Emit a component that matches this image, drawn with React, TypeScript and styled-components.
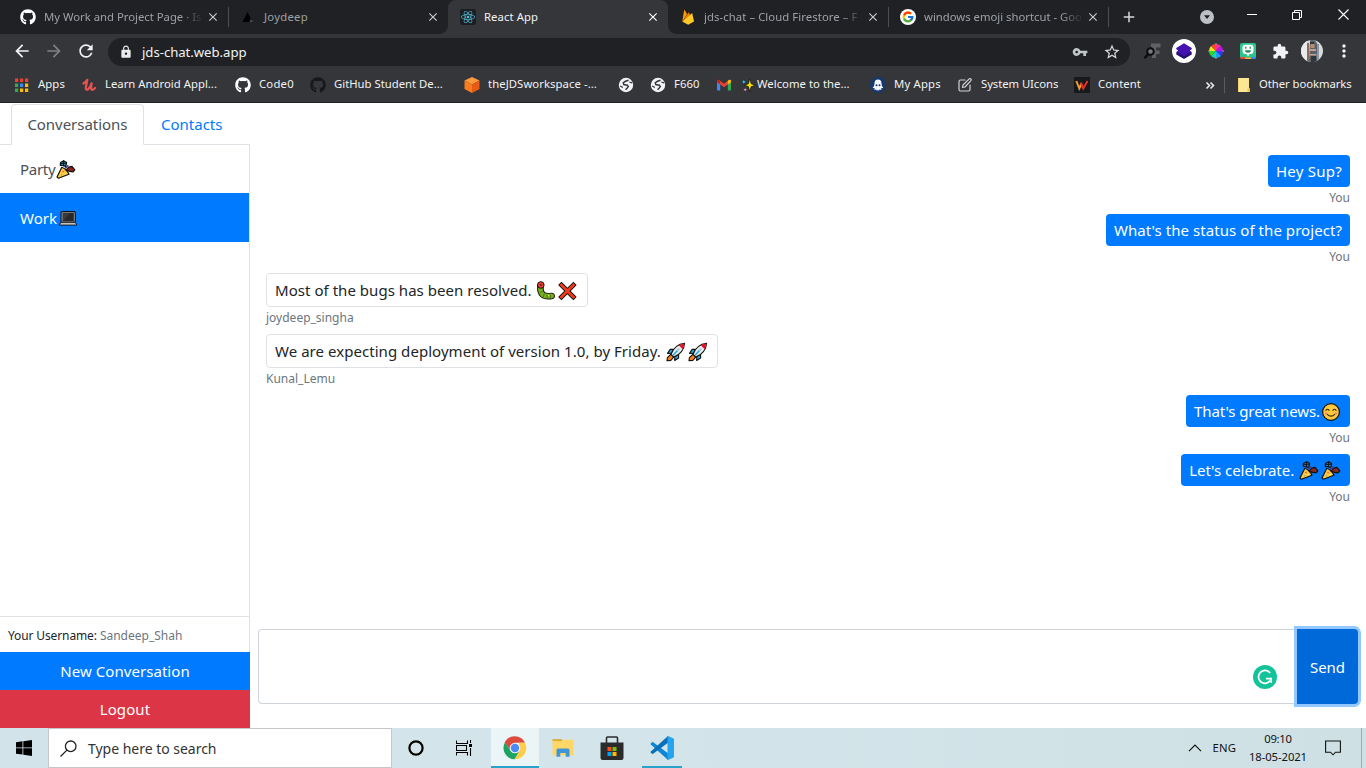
import React from 'react';
import styled, { createGlobalStyle, css } from 'styled-components';
import {
  MdAdd,
  MdArrowBack,
  MdArrowForward,
  MdClose,
  MdExtension,
  MdLock,
  MdMoreVert,
  MdRefresh,
  MdStarBorder,
  MdVpnKey,
} from 'react-icons/md';
import { FaGithub, FaReact } from 'react-icons/fa';
import { FcGoogle } from 'react-icons/fc';

const GlobalStyle = createGlobalStyle`
  * { box-sizing: border-box; }
  body { margin: 0; overflow: hidden; font-family: "Noto Sans", "Open Sans", sans-serif; }
  svg { display: block; flex: none; }
`;

const Screen = styled.div`
  width: 1366px;
  height: 768px;
  display: flex;
  flex-direction: column;
  background: #fff;
`;

const Label = styled.span<{ $track?: number }>`
  white-space: pre;
  letter-spacing: ${(p) => p.$track ?? 0}px;
`;

/* ---------- browser chrome ---------- */

const TabStrip = styled.header`
  height: 34px;
  display: flex;
  background: #202124;
  padding-left: 8px;
`;

const BrowserTab = styled.div<{ $active?: boolean; $divider?: boolean }>`
  position: relative;
  width: 220px;
  height: 34px;
  display: flex;
  align-items: center;
  gap: 8px;
  padding: 0 8px 0 12px;
  font-size: 11.3px;
  color: #9da1a6;
  ${(p) =>
    p.$active &&
    css`
      background: #35363a;
      color: #f1f3f4;
      border-radius: 8px 8px 0 0;
      &::before,
      &::after {
        content: '';
        position: absolute;
        bottom: 0;
        width: 8px;
        height: 8px;
      }
      &::before {
        left: -8px;
        background: radial-gradient(circle at 0 0, transparent 7.5px, #35363a 8px);
      }
      &::after {
        right: -8px;
        background: radial-gradient(circle at 100% 0, transparent 7.5px, #35363a 8px);
      }
    `}
  ${(p) =>
    p.$divider &&
    css`
      &::after {
        content: '';
        position: absolute;
        right: -1px;
        top: 7px;
        width: 1px;
        height: 20px;
        background: #4c4e52;
      }
    `}
`;

const TabTitle = styled.div<{ $fade?: boolean }>`
  width: 161px;
  height: 20px;
  line-height: 20px;
  white-space: pre;
  ${(p) => p.$fade && css`mask-image: linear-gradient(90deg, #000 136px, transparent 160px);`}
`;

const CloseIcon = styled(MdClose)<{ $bright?: boolean }>`
  width: 14px;
  height: 14px;
  margin-left: -7px;
  color: ${(p) => (p.$bright ? '#fff' : '#c8cbcf')};
`;

const NewTab = styled.div`
  width: 42px;
  display: flex;
  align-items: center;
  justify-content: center;
  color: #d5d7da;
`;

const WindowButtons = styled.div`
  margin-left: auto;
  display: flex;
  align-items: center;
`;

const WindowButton = styled.div<{ $w?: number; $drop?: number }>`
  width: ${(p) => p.$w ?? 46}px;
  padding-top: ${(p) => p.$drop ?? 0}px;
  height: 29px;
  display: flex;
  justify-content: center;
  align-items: center;
  align-self: flex-start;
`;

const Toolbar = styled.div`
  height: 34px;
  padding: 2px 6px 2px 6px;
  display: flex;
  align-items: center;
  background: #35363a;
`;

const ToolButton = styled.div<{ $dim?: boolean }>`
  width: 32px;
  height: 32px;
  display: flex;
  align-items: center;
  justify-content: center;
  color: ${(p) => (p.$dim ? '#7f8184' : '#f1f3f4')};
`;

const AddressBar = styled.div`
  width: 1022px;
  height: 28px;
  margin: 2px 6px 0;
  padding: 0 2px 0 11px;
  border-radius: 14px;
  background: #202124;
  color: #f1f3f4;
  display: flex;
  align-items: center;
  font-size: 13.2px;
  line-height: 20px;
  ${Label} {
    flex: 1;
    margin-left: 9px;
    padding-bottom: 1px;
  }
`;

const BookmarkBar = styled.nav`
  height: 35px;
  padding: 0 14px 0 14px;
  display: flex;
  align-items: center;
  background: #35363a;
  border-bottom: 1px solid #1f2023;
  color: #f1f3f4;
  font-size: 11.3px;
`;

const Bookmark = styled.div<{ $w: number }>`
  width: ${(p) => p.$w}px;
  display: flex;
  align-items: center;
  gap: 8px;
  line-height: 18px;
  padding-bottom: 1px;
  ${Label} {
    padding-bottom: 2px;
  }
`;

const BookmarkText = styled.div`
  display: flex;
  align-items: center;
`;

const Overflow = styled.div`
  margin-left: auto;
  display: flex;
  align-items: center;
`;

const OverflowDivider = styled.div`
  width: 1px;
  height: 16px;
  margin: 0 12px 0 9px;
  background: #5a5c60;
`;

/* ---------- chat page ---------- */

const Page = styled.main`
  flex: 1;
  min-height: 0;
  display: flex;
  font-size: 15px;
  line-height: 24px;
  color: #212529;
`;

const Sidebar = styled.aside`
  width: 250px;
  display: flex;
  flex-direction: column;
`;

const NavTabs = styled.div`
  height: 42px;
  padding: 1px 0 0 11px;
  display: flex;
  border-bottom: 1px solid #dee2e6;
`;

const NavTab = styled.div<{ $active?: boolean }>`
  height: 41px;
  padding: 7px 16px 0;
  border: 1px solid transparent;
  color: #007bff;
  ${(p) =>
    p.$active &&
    css`
      width: 133px;
      padding-left: 15.4px;
      background: #fff;
      color: #495057;
      border-color: #dee2e6 #dee2e6 #fff;
      border-radius: 4px 4px 0 0;
    `}
`;

const ConversationList = styled.div`
  flex: 1;
  border-right: 1px solid #dee2e6;
`;

const Conversation = styled.div<{ $active?: boolean }>`
  height: ${(p) => (p.$active ? 49 : 48)}px;
  padding: 1px 20px 0;
  display: flex;
  align-items: center;
  color: ${(p) => (p.$active ? '#fff' : '#495057')};
  background: ${(p) => (p.$active ? '#007bff' : '#fff')};
  ${Label} {
    padding-bottom: ${(p) => (p.$active ? 0 : 2)}px;
  }
`;

const Username = styled.div`
  height: 36px;
  padding: 8px;
  font-size: 12px;
  line-height: 21px;
  border-top: 1px solid #dee2e6;
  border-right: 1px solid #dee2e6;
`;

const Muted = styled.span`
  color: #6c757d;
`;

const BlockButton = styled.div<{ $color: string }>`
  height: 38px;
  display: flex;
  align-items: center;
  justify-content: center;
  padding-bottom: 1px;
  color: #fff;
  background: ${(p) => p.$color};
`;

const Chat = styled.section`
  flex: 1;
  display: flex;
  flex-direction: column;
`;

const Messages = styled.div`
  flex: 1;
  padding: 52px 16px 0;
  display: flex;
  flex-direction: column;
  gap: 8px;
`;

const Message = styled.div<{ $mine?: boolean }>`
  display: flex;
  flex-direction: column;
  align-items: ${(p) => (p.$mine ? 'flex-end' : 'flex-start')};
`;

const Bubble = styled.div<{ $mine?: boolean }>`
  height: ${(p) => (p.$mine ? 32 : 34)}px;
  padding: 1px 8px 0;
  display: flex;
  align-items: center;
  border-radius: 4px;
  ${(p) => (p.$mine ? 'background: #007bff; color: #fff;' : 'border: 1px solid #dee2e6;')}
  ${Label} {
    padding-bottom: 2px;
  }
`;

const Sender = styled.div`
  height: 19px;
  line-height: 21px;
  font-size: 12px;
  color: #6c757d;
`;

const Composer = styled.div`
  position: relative;
  height: 99px;
  padding: 0 8px 24px;
  display: flex;
`;

const MessageInput = styled.div`
  flex: 1;
  border: 1px solid #ced4da;
  border-right: 0;
  border-radius: 4px 0 0 4px;
`;

const SendButton = styled.div`
  width: 61px;
  display: flex;
  align-items: center;
  justify-content: center;
  color: #fff;
  background: #0069d9;
  border-radius: 0 4px 4px 0;
  box-shadow: 0 0 0 3px #93c7ff;
`;

const Grammar = styled.div`
  position: absolute;
  right: 89px;
  top: 36px;
`;

/* ---------- taskbar ---------- */

const Taskbar = styled.footer`
  height: 40px;
  display: flex;
  background: linear-gradient(90deg, #d3e3ea, #d3e5ea 50%, #cfe0e5);
  color: #101314;
`;

const StartButton = styled.div`
  width: 48px;
  display: flex;
  align-items: center;
  justify-content: center;
`;

const SearchBox = styled.div`
  width: 344px;
  padding: 1px 11px 0;
  display: flex;
  align-items: center;
  gap: 11px;
  border: 1px solid #c4c8ca;
  background: #fff;
  color: #333;
  font-size: 14px;
  line-height: 22px;
`;

const TaskItem = styled.div<{ $active?: boolean; $gap?: number; $line?: number }>`
  position: relative;
  width: 48px;
  margin-left: ${(p) => p.$gap ?? 0}px;
  display: flex;
  align-items: center;
  justify-content: center;
  background: ${(p) => (p.$active ? '#ebf4f7' : 'transparent')};
  ${(p) =>
    p.$line &&
    css`
      &::after {
        content: '';
        position: absolute;
        bottom: 0;
        left: ${(48 - p.$line) / 2}px;
        width: ${p.$line}px;
        height: 2px;
        background: #2aa3cb;
      }
    `}
`;

const Tray = styled.div`
  margin-left: auto;
  display: flex;
  align-items: center;
  font-size: 11.3px;
`;

const Language = styled.div`
  margin: 0 13px 0 11px;
  padding-bottom: 1px;
`;

const Clock = styled.div`
  width: 58px;
  display: flex;
  flex-direction: column;
  align-items: center;
  line-height: 18px;
`;

const NotificationSlot = styled.div`
  margin: 0 20px 0 18px;
`;

const ShowDesktop = styled.div`
  width: 5px;
  height: 40px;
  border-left: 1px solid #9fadb2;
`;

/* ---------- emoji ---------- */

const Party = () => (
  <svg width="22" height="22" viewBox="0 0 22 22" strokeLinejoin="round" strokeLinecap="round">
    <path d="M6.800 8.200 Q11.500 10 14 15.200L3.400 19.200 2 17.900Z" fill="#ffc83d" stroke="#111" strokeWidth="1.200" />
    <path d="M5.500 3.500 8.600 1.800 11.600 3.500 10.800 7.700 8.300 6.500 5.300 6.300Z" fill="#2580a6" stroke="#111" strokeWidth="1.200" />
    <path d="M8.500 2v5M5.800 4.600l5.400-.4" stroke="#111" strokeWidth="0.900" />
    <path d="M11 11.200 13.800 8.200 17 7.400 19.800 10.800 18 12.800 14.800 12.400Z" fill="#8c261c" stroke="#111" strokeWidth="1.200" />
    <path d="M10.500 8.800 12.800 6.800" stroke="#463a9b" strokeWidth="1.600" />
    <circle cx="8" cy="12.600" r="0.800" fill="#e25544" />
    <circle cx="6.800" cy="15.800" r="0.600" fill="#2fa7c9" />
    <circle cx="10.500" cy="14.500" r="0.600" fill="#fff3b8" />
  </svg>
);

const Laptop = () => (
  <svg width="22" height="22" viewBox="0 0 22 22">
    <rect x="4" y="4.6" width="14.3" height="10.8" rx="1" fill="#9b9b9b" stroke="#111" strokeWidth="1.1" />
    <rect x="5.6" y="6" width="11.2" height="8.2" fill="#282828" />
    <path d="M6 14 13 6.2h-7Z" fill="#3b3b3b" />
    <path d="M3.8 15.3h14.6l1.3 2.8H2.4Z" fill="#c2c2c2" stroke="#111" strokeWidth="0.9" strokeLinejoin="round" />
  </svg>
);

const Bug = () => (
  <svg width="22" height="22" viewBox="0 0 22 22">
    <path d="M5.400 6.500Q5 12 7.500 14.400T16.600 16" fill="none" stroke="#111" strokeWidth="6.600" strokeLinecap="round" />
    <path d="M5.400 6.500Q5 12 7.500 14.400T16.600 16" fill="none" stroke="#78b020" strokeWidth="4.800" strokeLinecap="round" />
    <path d="M5 12.500l2.800-1.500M8.200 17l1.200-3.500M12 18.500v-3.800M15.500 18.500v-3.800" stroke="#44700f" strokeWidth="0.900" />
    <circle cx="13.700" cy="15.500" r="0.800" fill="#d5e04a" />
    <circle cx="5.800" cy="5" r="3.300" fill="#e8402d" stroke="#111" strokeWidth="1" />
    <circle cx="5.800" cy="5" r="1.100" fill="#701b10" />
  </svg>
);

const Cross = () => (
  <svg width="22" height="22" viewBox="0 0 22 22" strokeLinecap="square">
    <path d="m4.400 5 12 12M16.400 5l-12 12" stroke="#111" strokeWidth="4.600" />
    <path d="m4.400 5 12 12M16.400 5l-12 12" stroke="#f03a17" strokeWidth="2.800" />
  </svg>
);

const Rocket = () => (
  <svg width="22" height="22" viewBox="0 0 22 22" strokeLinejoin="round">
    <path d="M6.200 13 2.400 16.600 2 19.700 5.800 19.400 9 15.800Z" fill="#f7821b" stroke="#111" strokeWidth="1.100" />
    <path d="M8.600 8.400H5.200L2.500 12.400 6.600 12.300ZM13.600 13.400V17L9.700 19.500 9.800 15.600Z" fill="#2aa8e0" stroke="#111" strokeWidth="1.100" />
    <path d="M6 13.400Q9.800 3.200 19.600 2.200 18.800 12.200 8.600 16Z" fill="#e8edf0" stroke="#111" strokeWidth="1.100" />
    <path d="M13.800 4.200Q16.600 2.800 19.300 2.500 19 5.600 17.600 8.200Z" fill="#e81224" />
    <path d="m8 14.200 4.400-4.600" stroke="#2aa8e0" strokeWidth="1.600" />
    <circle cx="13.400" cy="8.500" r="1.300" fill="#b4c6ce" />
  </svg>
);

const Smile = () => (
  <svg width="22" height="22" viewBox="0 0 22 22" fill="none" strokeLinecap="round">
    <circle cx="11" cy="11" r="8.400" fill="#ffc83d" stroke="#111" strokeWidth="1.200" />
    <path d="M5.900 9.400q1.600-2.200 3.200 0M12.900 9.400q1.600-2.200 3.200 0" stroke="#3a2a10" strokeWidth="1.100" />
    <path d="M7.200 13.400q3.800 3.400 7.600 0" stroke="#3a2a10" strokeWidth="1.100" />
    <circle cx="5.900" cy="12.300" r="1.300" fill="#ff8f5a" />
    <circle cx="16.100" cy="12.300" r="1.300" fill="#ff8f5a" />
  </svg>
);

const Sparkles = () => (
  <svg width="17" height="16" viewBox="0 0 17 16">
    <path d="M9.8 1.6 11.2 6.8 15.6 8.2 11.2 9.6 9.8 14.6 8.4 9.6 4.4 8.2 8.4 6.8Z" fill="#fce100" stroke="#111" strokeWidth="0.7" />
    <path d="m3.8 2 .8 2.1 2 .8-2 .8-.8 2.1L3 5.7 1 4.9 3 4.1Z" fill="#31c4ee" stroke="#111" strokeWidth="0.4" />
    <path d="m5.2 10.2.7 1.8 1.7.7-1.7.7-.7 1.7-.7-1.7-1.7-.7 1.7-.7Z" fill="#f7a1d4" stroke="#111" strokeWidth="0.4" />
  </svg>
);

/* ---------- site and app icons ---------- */

const Triangle = () => (
  <svg width="16" height="16" viewBox="0 0 16 16">
    <path d="M7.500 3 12.500 13H2.500Z" fill="#000" />
    <path d="m10.500 10 3 3h-4Z" fill="#4a4b4e" />
  </svg>
);

const ReactBadge = styled(FaReact)`
  width: 16px;
  height: 16px;
  padding: 1px;
  border-radius: 2px;
  background: #1c1e22;
  color: #53c1de;
`;

const Firebase = () => (
  <svg width="16" height="16" viewBox="0 0 16 16">
    <path d="M2.300 12.500 4.300.600 7 5Z" fill="#ffa000" />
    <path d="m2.300 12.500 6.400-9.300L10.300 6Z" fill="#f57c00" />
    <path d="m2.300 12.500 9.900-8.600 1.800 8.600-5.800 3.300Z" fill="#ffca28" />
  </svg>
);

const GoogleBadge = styled(FcGoogle)`
  width: 16px;
  height: 16px;
  padding: 1.5px;
  border-radius: 50%;
  background: #fff;
`;

const Apps = () => (
  <svg width="16" height="16" viewBox="0 0 16 16">
    {['#ea4335', '#ea4335', '#ea4335', '#34a853', '#4285f4', '#fbbc04', '#34a853', '#fbbc04', '#fbbc04'].map((c, i) => (
      <rect key={i} x={1 + (i % 3) * 5} y={1.5 + Math.floor(i / 3) * 5} width="3.2" height="3.5" fill={c} />
    ))}
  </svg>
);

const Udemy = () => (
  <svg width="16" height="16" viewBox="0 0 16 16" fill="none" stroke="#ea5252" strokeWidth="2.2" strokeLinecap="round" strokeLinejoin="round">
    <path d="M2.500 6.500Q5.500 4.500 6.300 2.800 5.400 8 4.800 10.500 4.500 13.400 7 12.400 9.400 10.500 10.600 6.300 9.500 12.800 11 12.900 12.800 12.800 14.200 10.800" />
  </svg>
);

const Cube = () => (
  <svg width="16" height="16" viewBox="0 0 16 16">
    <path d="M8 0 15.500 3.500 8 7.500.500 3.500Z" fill="#ff9a3c" />
    <path d="M.500 3.500 8 7.500V16L.500 12Z" fill="#f97c1e" />
    <path d="M15.500 3.500 8 7.500V16l7.500-4Z" fill="#ea5a14" />
  </svg>
);

const Globe = () => (
  <svg width="16" height="16" viewBox="0 0 16 16">
    <circle cx="8" cy="8" r="7.200" fill="#f1f3f4" />
    <path d="M10.500 3.200 7.500 4.200 5.300 5.800 5.800 7.600 9.300 8.200 10.300 9.600 9 11.300 7.600 12.800" fill="none" stroke="#35363a" strokeWidth="1.500" />
    <path d="M11.500 5.200 14 5.800M2.200 9 4.800 10.500" stroke="#35363a" strokeWidth="1.300" />
  </svg>
);

const Gmail = () => (
  <svg width="16" height="16" viewBox="0 0 16 16">
    <path d="M1 4v8.600q0 .9.9.9h2.300V7Z" fill="#4285f4" />
    <path d="M15 4v8.600q0 .9-.9.9h-2.300V7Z" fill="#34a853" />
    <path d="M1 5V3.600Q1.500 2.200 3 2.900L8 6.700l5-3.800q1.500-.7 2 .7V5l-7 5.300Z" fill="#ea4335" />
    <path d="m15 3.600v1.600l-3.200 2.400V3.800L13 2.900q1.500-.7 2 .7Z" fill="#fbbc04" />
    <path d="M1 5V3.600Q1.500 2.200 3 2.900l1.200.9v3.800Z" fill="#c5221f" />
  </svg>
);

const Octopus = () => (
  <svg width="16" height="16" viewBox="0 0 16 16">
    <circle cx="8" cy="8" r="8" fill="#16396d" />
    <path d="M8 2.500q3.500 0 3.500 4 0 2.300 1.800 4.500l-2.300.3.500 1.700-2-.6-.7 1.600L8 12.600 7 14l-.7-1.600-2 .6.500-1.700L2.700 11q1.800-2.200 1.800-4.500 0-4 3.500-4Z" fill="#f4f6f8" />
    <circle cx="6.500" cy="8.300" r="1" fill="#16396d" />
    <circle cx="9.500" cy="8.300" r="1" fill="#16396d" />
  </svg>
);

const PencilBox = () => (
  <svg width="16" height="16" viewBox="0 0 16 16" fill="none" stroke="#d0d2d4" strokeWidth="1.200" strokeLinejoin="round" strokeLinecap="round">
    <path d="M8 3H3.500Q2 3 2 4.500v8Q2 14 3.500 14h8q1.500 0 1.500-1.500V8" />
    <path d="M5.500 10.500 6 8l6.200-6.200q1-.6 1.700.2t0 1.700L8 10Z" />
  </svg>
);

const WBadge = () => (
  <svg width="16" height="16" viewBox="0 0 16 16" fill="none" strokeWidth="2">
    <rect width="16" height="16" fill="#17191b" />
    <path d="m2.300 4 3 7.500L7.500 6.500" stroke="#f0a030" />
    <path d="m6.800 5.500 2.500 6L13.500 4" stroke="#e0322e" />
  </svg>
);

const Folder = () => (
  <svg width="14" height="16" viewBox="0 0 14 16">
    <path d="M1 1h11v10.500h1V15H1Z" fill="#ffe694" />
    <path d="M10.500 11.500h2.500V15h-2.500Z" fill="#e9c74e" />
    <path d="M1 1h1v14H1Z" fill="#f3d36a" />
  </svg>
);

const Scanner = () => (
  <svg width="18" height="18" viewBox="0 0 18 18" fill="none">
    <path d="M8 1.500h9.500V5.500H13v3h3.500V12H13v4H9V5.500H8Z" fill="#5f6165" />
    <circle cx="7.500" cy="9.500" r="3.300" stroke="#0c0c0d" strokeWidth="2" fill="#77797c" />
    <path d="m5 12.300-3.500 4" stroke="#0c0c0d" strokeWidth="2.500" />
  </svg>
);

const Layers = () => (
  <svg width="24" height="24" viewBox="0 0 24 24">
    <circle cx="12" cy="12" r="12" fill="#fff" />
    <path d="m4.300 13.300 7.700-3 7.700 3v2.200L12 20l-7.700-4.500Z" fill="#24116b" />
    <path d="m12 4.200 7.700 4.800v1.200l-2 1.400 2 1.300L12 17.200l-7.700-4.300 2-1.300-2-1.400V9Z" fill="#4412b0" />
  </svg>
);

const wheel = ['#ff2d9b', '#c011f0', '#3a33f8', '#1ca0ff', '#16d8b0', '#30d828', '#f0e51b', '#ff4a20'];
const ColorWheel = () => (
  <svg width="16" height="16" viewBox="-8 -8 16 16">
    {wheel.map((c, i) => (
      <path key={c} d="M0 0V-7A7 7 0 0 1 4.950-4.950Z" fill={c} transform={`rotate(${i * 45})`} />
    ))}
    <path d="M0-8V-6M0 8V6M-8 0H-6M8 0H6" stroke="#9a9c9f" />
  </svg>
);

const Bitmoji = () => (
  <svg width="16" height="16" viewBox="0 0 16 16">
    <rect width="16" height="16" rx="2" fill="#2bc48a" />
    <path d="M0 14h5v2H2q-2 0-2-2Z" fill="#ef3f3a" />
    <path d="M5 14.500h6V16H5Z" fill="#ffb02e" />
    <path d="M11 14h5q0 2-2 2h-3Z" fill="#3b82f6" />
    <path d="M5 1.800h6q2.500 0 2.500 2.500v4q0 2.500-2.500 2.700H9.500L8 13.500 6.500 11H5Q2.500 10.800 2.500 8.300v-4Q2.500 1.800 5 1.800Z" fill="#fff" />
    <path d="M5.800 3.800v2M10.200 3.800v2" stroke="#178a60" strokeWidth="1.300" />
    <path d="M4.800 7.300h6.400q-.5 2.500-3.200 2.500T4.800 7.300Z" fill="#178a60" />
  </svg>
);

const Avatar = () => (
  <svg width="22" height="22" viewBox="0 0 22 22">
    <clipPath id="avatar">
      <circle cx="11" cy="11" r="11" />
    </clipPath>
    <g clipPath="url(#avatar)">
      <rect width="22" height="22" fill="#d6dadd" />
      <path d="M0 0h6l1 22H0Z" fill="#e8eaeb" />
      <path d="M6 3h2v18H6Z" fill="#8f6b58" />
      <path d="M9 0h5l3 5v17H8Z" fill="#59616a" />
      <path d="M9.500 4h4v4h-4Z" fill="#b98e77" />
      <path d="M9 9h6v2H9ZM8.500 14h7v1.500h-7Z" fill="#c2a08d" />
      <path d="M10 16h5v6h-5ZM9 2h4v2H9Z" fill="#2f353c" />
      <path d="M16 4h2v18h-2Z" fill="#8b97a2" />
    </g>
  </svg>
);

const TabSearch = () => (
  <svg width="14" height="14" viewBox="0 0 14 14">
    <circle cx="7" cy="7" r="7" fill="#bdc1c6" />
    <path d="M4 5.200h6L7 9Z" fill="#202124" />
  </svg>
);

const Minimize = () => (
  <svg width="10" height="10" viewBox="0 0 10 10">
    <path d="M0 4.500h10" stroke="#fff" />
  </svg>
);

const Restore = () => (
  <svg width="10" height="10" viewBox="0 0 10 10" fill="none" stroke="#fff">
    <path d="M.500 2.500h7v7h-7ZM2.500 2.500v-2h7v7h-2" />
  </svg>
);

const CloseWindow = () => (
  <svg width="11" height="11" viewBox="0 0 11 11">
    <path d="m.500.500 10 10M10.500.500l-10 10" stroke="#fff" strokeWidth="1.100" />
  </svg>
);

const Chevrons = () => (
  <svg width="10" height="9" viewBox="0 0 10 9" fill="none" stroke="#e8eaed" strokeWidth="1.600">
    <path d="M1.500 1.500 4.500 4.500 1.500 7.500M5.500 1.500 8.500 4.500 5.500 7.500" />
  </svg>
);

const Grammarly = () => (
  <svg width="24" height="24" viewBox="0 0 24 24" fill="none">
    <circle cx="12" cy="12" r="12" fill="#15c39a" />
    <path d="M17.200 8A6.500 6.500 0 1 0 17.300 15.600" stroke="#fff" strokeWidth="1.700" />
    <path d="M13 13.700h5.200v4.200" stroke="#fff" strokeWidth="1.700" />
  </svg>
);

const Windows = () => (
  <svg width="16" height="16" viewBox="0 0 16 16" fill="#000">
    <path d="M0 2.200 6.500 1.300v6.200H0ZM7.300 1.200 16 0v7.500H7.300ZM0 8.300h6.500v6.300L0 13.700ZM7.300 8.300H16V16l-8.700-1.200Z" />
  </svg>
);

const SearchGlass = () => (
  <svg width="17" height="17" viewBox="0 0 17 17" fill="none" stroke="#222" strokeWidth="1.300">
    <circle cx="10.700" cy="6.300" r="5.300" />
    <path d="M6.900 10.100.500 16.500" />
  </svg>
);

const Cortana = () => (
  <svg width="16" height="16" viewBox="0 0 16 16">
    <circle cx="8" cy="8" r="6.600" fill="none" stroke="#000" strokeWidth="2.200" />
  </svg>
);

const TaskView = () => (
  <svg width="17" height="16" viewBox="0 0 17 16" fill="none" stroke="#000" strokeWidth="1.100">
    <path d="M.500.500v3h11v-3M.500 15.500v-3h11v3M.500 5.500h10v5h-10ZM14.500 0v3M14.500 8v8" />
    <path d="M13 4h3v3h-3Z" fill="#000" stroke="none" />
  </svg>
);

const Chrome = () => (
  <svg width="24" height="24" viewBox="0 0 24 24">
    <path d="M1.600 6.500A11.300 11.300 0 0 1 22 6.800H12L7.500 14.500Z" fill="#dd4b3e" />
    <path d="M22 6.800A11.300 11.300 0 0 1 11.500 23.300L16.500 14.600 16 6.800Z" fill="#ffcd46" />
    <path d="M1.900 6.500A11.300 11.300 0 0 0 11.500 23.300L16.600 14.600 7.400 14.600Z" fill="#1da362" />
    <circle cx="12" cy="12" r="5.300" fill="#f1f5f7" />
    <circle cx="12" cy="12" r="4.200" fill="#4a8af4" />
  </svg>
);

const Explorer = () => (
  <svg width="22" height="20" viewBox="0 0 22 20">
    <path d="M.500 1.200h9l1.500 2H.500Z" fill="#d9a013" />
    <path d="M.500 2.800h9l1.500-1h10.500v15.700H.500Z" fill="#ffd667" />
    <path d="M4.500 18.800V12q0-1.500 1.500-1.500h10q1.500 0 1.500 1.500v6.800h-3.800V15H8.300v3.800Z" fill="#3f96d6" />
  </svg>
);

const Store = () => (
  <svg width="24" height="24" viewBox="0 0 24 24">
    <path d="M6.500 7V2q0-1 1-1h9q1 0 1 1v5" fill="none" stroke="#2b2b2d" strokeWidth="1.600" />
    <path d="M.500 6.500h23V22q0 2-2 2h-19q-2 0-2-2Z" fill="#2b2b2d" />
    <path d="M7.500 11h4v4h-4Z" fill="#f2501e" />
    <path d="M12.500 11h4v4h-4Z" fill="#7fba00" />
    <path d="M7.500 16h4v4h-4Z" fill="#00a4ef" />
    <path d="M12.500 16h4v4h-4Z" fill="#ffb900" />
  </svg>
);

const VSCode = () => (
  <svg width="24" height="24" viewBox="0 0 24 24">
    <path d="M.300 8 2.500 5.800 18 17.300V24Z" fill="#0d87d2" />
    <path d="M.300 16 2.500 18.200 18 6.700V0Z" fill="#0b70b8" />
    <path d="M17 .500 18 0l6 2.800v18.400L18 24l-1-.5.500-.6V1.300Z" fill="#27a4ee" />
  </svg>
);

const TrayChevron = () => (
  <svg width="14" height="8" viewBox="0 0 14 8" fill="none" stroke="#111" strokeWidth="1.200">
    <path d="M1 7.200 7 1.200l6 6" />
  </svg>
);

const Notification = () => (
  <svg width="16" height="16" viewBox="0 0 16 16" fill="none" stroke="#111" strokeWidth="1.100">
    <path d="M.600 1h14.800v11.200H10.500L8 14.800 5.500 12.200H.600Z" />
  </svg>
);

/* ---------- data ---------- */

const browserTabs = [
  { icon: <FaGithub size={16} color="#fff" />, title: 'My Work and Project Page · Is', fade: true, divider: true },
  { icon: <Triangle />, title: 'Joydeep', track: 0.25 },
  { icon: <ReactBadge />, title: 'React App', active: true, track: 0.08 },
  { icon: <Firebase />, title: 'jds-chat – Cloud Firestore – F', fade: true, divider: true, track: 0.08 },
  { icon: <GoogleBadge />, title: 'windows emoji shortcut - Goo', fade: true, divider: true },
];

const bookmarks = [
  { w: 67, icon: <Apps />, text: 'Apps', track: 0.1 },
  { w: 154, icon: <Udemy />, text: 'Learn Android Appl...', track: 0.02 },
  { w: 75, icon: <FaGithub size={16} color="#fff" />, text: 'Code0', track: 0.22 },
  { w: 154, icon: <FaGithub size={16} color="#16181b" />, text: 'GitHub Student De...' },
  { w: 154, icon: <Cube />, text: 'theJDSworkspace -...', track: 0.07 },
  { w: 32, icon: <Globe /> },
  { w: 66, icon: <Globe />, text: 'F660', track: 0.06 },
  { w: 154, icon: <Gmail />, emoji: <Sparkles />, text: 'Welcome to the...', track: 0.03 },
  { w: 87, icon: <Octopus />, text: 'My Apps', track: 0.2 },
  { w: 117, icon: <PencilBox />, text: 'System UIcons', track: -0.06 },
  { w: 80, icon: <WBadge />, text: 'Content', track: 0.07 },
];

const messages = [
  { mine: true, sender: 'You', text: 'Hey Sup?', track: 0.24 },
  { mine: true, sender: 'You', text: "What's the status of the project?", track: 0.06 },
  { sender: 'joydeep_singha', text: 'Most of the bugs has been resolved. ', track: 0.04, emoji: [Bug, Cross] },
  { sender: 'Kunal_Lemu', text: 'We are expecting deployment of version 1.0, by Friday. ', track: 0.045, emoji: [Rocket, Rocket] },
  { mine: true, sender: 'You', text: "That's great news.", track: -0.085, emoji: [Smile] },
  { mine: true, sender: 'You', text: "Let's celebrate. ", track: -0.03, emoji: [Party, Party] },
];

export default function App() {
  return (
    <Screen>
      <GlobalStyle />
      <TabStrip>
        {browserTabs.map((t) => (
          <BrowserTab key={t.title} $active={t.active} $divider={t.divider}>
            {t.icon}
            <TabTitle $fade={t.fade}>
              <Label $track={t.track}>{t.title}</Label>
            </TabTitle>
            <CloseIcon $bright={t.active} />
          </BrowserTab>
        ))}
        <NewTab>
          <MdAdd size={18} />
        </NewTab>
        <WindowButtons>
          <WindowButton $drop={5}>
            <TabSearch />
          </WindowButton>
          <WindowButton $w={44}>
            <Minimize />
          </WindowButton>
          <WindowButton>
            <Restore />
          </WindowButton>
          <WindowButton>
            <CloseWindow />
          </WindowButton>
        </WindowButtons>
      </TabStrip>

      <Toolbar>
        <ToolButton>
          <MdArrowBack size={20} />
        </ToolButton>
        <ToolButton $dim>
          <MdArrowForward size={20} />
        </ToolButton>
        <ToolButton>
          <MdRefresh size={20} />
        </ToolButton>
        <AddressBar>
          <MdLock size={14} color="#e8eaed" />
          <Label $track={-0.05}>jds-chat.web.app</Label>
          <ToolButton>
            <MdVpnKey size={16} color="#c4c7ca" />
          </ToolButton>
          <ToolButton>
            <MdStarBorder size={18} color="#dadce0" />
          </ToolButton>
        </AddressBar>
        <ToolButton>
          <Scanner />
        </ToolButton>
        <ToolButton>
          <Layers />
        </ToolButton>
        <ToolButton>
          <ColorWheel />
        </ToolButton>
        <ToolButton>
          <Bitmoji />
        </ToolButton>
        <ToolButton>
          <MdExtension size={17} />
        </ToolButton>
        <ToolButton>
          <Avatar />
        </ToolButton>
        <ToolButton>
          <MdMoreVert size={20} />
        </ToolButton>
      </Toolbar>

      <BookmarkBar>
        {bookmarks.map((b, i) => (
          <Bookmark key={i} $w={b.w}>
            {b.icon}
            <BookmarkText>
              {b.emoji}
              {b.text && <Label $track={b.track}>{b.text}</Label>}
            </BookmarkText>
          </Bookmark>
        ))}
        <Overflow>
          <Chevrons />
          <OverflowDivider />
          <Bookmark $w={115}>
            <Folder />
            <Label $track={-0.06}>Other bookmarks</Label>
          </Bookmark>
        </Overflow>
      </BookmarkBar>

      <Page>
        <Sidebar>
          <NavTabs>
            <NavTab $active>
              <Label $track={-0.04}>Conversations</Label>
            </NavTab>
            <NavTab>
              <Label>Contacts</Label>
            </NavTab>
          </NavTabs>
          <ConversationList>
            <Conversation>
              <Label $track={-0.3}>Party</Label>
              <Party />
            </Conversation>
            <Conversation $active>
              <Label>Work</Label>
              <Laptop />
            </Conversation>
          </ConversationList>
          <Username>
            <Label $track={-0.12}>Your Username: </Label>
            <Muted>Sandeep_Shah</Muted>
          </Username>
          <BlockButton $color="#007bff">
            <Label $track={0.06}>New Conversation</Label>
          </BlockButton>
          <BlockButton $color="#dc3545">
            <Label $track={0.1}>Logout</Label>
          </BlockButton>
        </Sidebar>
        <Chat>
          <Messages>
            {messages.map((m) => (
              <Message key={m.text} $mine={m.mine}>
                <Bubble $mine={m.mine}>
                  <Label $track={m.track}>{m.text}</Label>
                  {m.emoji?.map((Emoji, i) => (
                    <Emoji key={i} />
                  ))}
                </Bubble>
                <Sender>{m.sender}</Sender>
              </Message>
            ))}
          </Messages>
          <Composer>
            <MessageInput />
            <SendButton>Send</SendButton>
            <Grammar>
              <Grammarly />
            </Grammar>
          </Composer>
        </Chat>
      </Page>

      <Taskbar>
        <StartButton>
          <Windows />
        </StartButton>
        <SearchBox>
          <SearchGlass />
          <Label $track={-0.02}>Type here to search</Label>
        </SearchBox>
        <TaskItem>
          <Cortana />
        </TaskItem>
        <TaskItem>
          <TaskView />
        </TaskItem>
        <TaskItem $active $gap={3} $line={48}>
          <Chrome />
        </TaskItem>
        <TaskItem>
          <Explorer />
        </TaskItem>
        <TaskItem $gap={1}>
          <Store />
        </TaskItem>
        <TaskItem $gap={2} $line={40}>
          <VSCode />
        </TaskItem>
        <Tray>
          <TrayChevron />
          <Language>
            <Label $track={0.1}>ENG</Label>
          </Language>
          <Clock>
            <Label $track={-0.25}>09:10</Label>
            <Label $track={-0.1}>18-05-2021</Label>
          </Clock>
          <NotificationSlot>
            <Notification />
          </NotificationSlot>
          <ShowDesktop />
        </Tray>
      </Taskbar>
    </Screen>
  );
}
